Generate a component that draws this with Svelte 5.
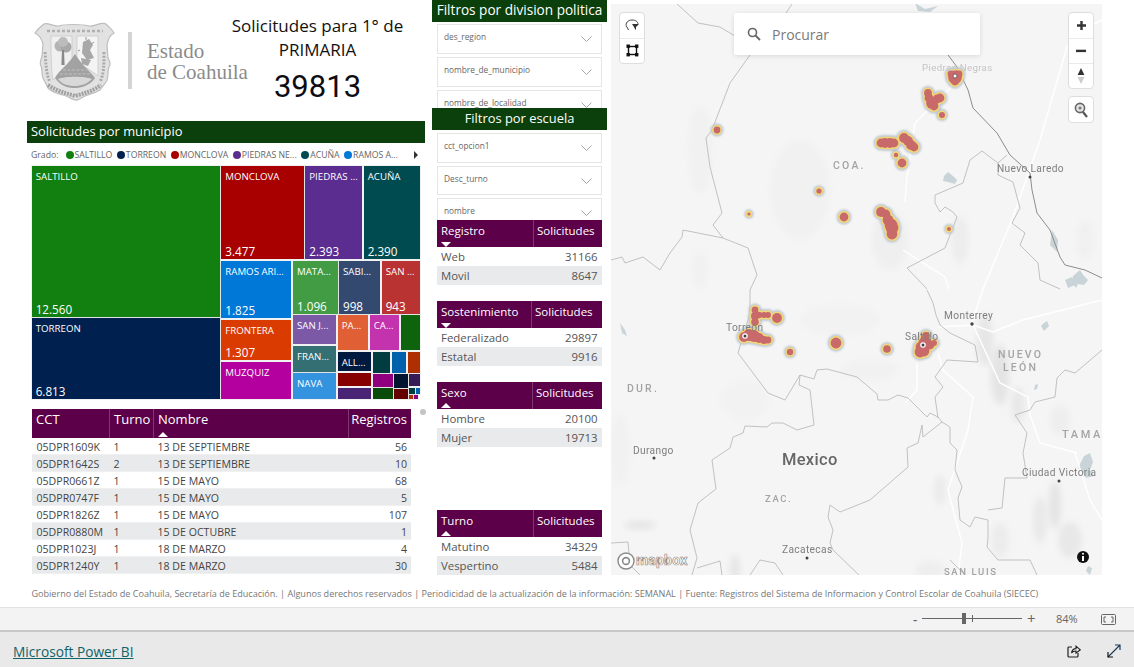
<script>
  const tiles = [
    [31.7,166,220,316.7,'#118011','SALTILLO','12.560'],
    [31.7,318.3,220,399.3,'#00214f','TORREON','6.813'],
    [221.3,166,304,259.3,'#a80000','MONCLOVA','3.477'],
    [305.3,166,362.3,259.3,'#5c2d91','PIEDRAS ...','2.393'],
    [363.7,166,420.3,259.3,'#004b50','ACUÑA','2.390'],
    [221.3,261,291,318,'#0078d7','RAMOS ARI...','1.825'],
    [293,261,337.7,313.7,'#429c44','MATA...','1.096'],
    [339,261,380.3,313.7,'#33496f','SABI...','998'],
    [381.7,261,420.3,313.7,'#b93333','SAN ...','943'],
    [221.3,319.7,291,360,'#da3b01','FRONTERA','1.307'],
    [221.3,362,291,399.3,'#b4009e','MUZQUIZ',''],
    [293,315,336.3,344,'#7c59a7','SAN J...',''],
    [293,345.7,336.3,371.7,'#336f73','FRAN...',''],
    [293,373.3,336.3,399.3,'#3393df','NAVA',''],
    [337.7,315,368,350,'#e15f35','PA...',''],
    [369.7,315,399.3,350,'#c333ae','CA...',''],
    [400.7,315,420.3,350,'#0d640d','',''],
    [337.7,351.7,371.3,371,'#001a3f','ALL...',''],
    [372.7,351.7,390,373,'#003c40','',''],
    [391.7,351.7,406.3,373,'#0060ac','',''],
    [408,351.7,420.3,373,'#ae2f01','',''],
    [337.7,372.7,371.3,386,'#860000','',''],
    [337.7,387.7,371.3,399.3,'#492474','',''],
    [372.7,374.3,392.7,386.7,'#90007e','',''],
    [394,374.3,407.7,387.7,'#00142f','',''],
    [409,374.3,420.3,386,'#371b57','',''],
    [372.7,388,392.7,399.3,'#0a4b0a','',''],
    [394,389.3,407.7,399.3,'#650000','',''],
    [409,387.7,415,394.3,'#003c40','',''],
    [415.7,387.7,420.3,394.3,'#0060ac','',''],
    [409,395,413.3,399.3,'#ae2f01','',''],
    [414,395,418.3,399.3,'#90007e','','']
  ];
  const legend = [
    ['#118011','SALTILLO'],['#00214f','TORREON'],['#a80000','MONCLOVA'],
    ['#5c2d91','PIEDRAS NE...'],['#004b50','ACUÑA'],['#0078d7','RAMOS A...']
  ];
  const rows = [
    ['05DPR1609K','1','13 DE SEPTIEMBRE','56'],
    ['05DPR1642S','2','13 DE SEPTIEMBRE','10'],
    ['05DPR0661Z','1','15 DE MAYO','68'],
    ['05DPR0747F','1','15 DE MAYO','5'],
    ['05DPR1826Z','1','15 DE MAYO','107'],
    ['05DPR0880M','1','15 DE OCTUBRE','1'],
    ['05DPR1023J','1','18 DE MARZO','4'],
    ['05DPR1240Y','1','18 DE MARZO','30']
  ];
  const blobs = [
    [955,77,6.5],[951,74,3],[959,74,3],[955,81,4],
    [928,93,3.5],[929,98,4],[932,103,5.5],[934,106,4],[937,99,4],[940,98,4],
    [942,115,2.6],[717,130,3],
    [881,143,4],[885,143,4.5],[890,143,4.5],[894,143,4],
    [904,138,4.5],[908,141,4.5],[911,145,4.5],[914,147,4],
    [896,155,1.8],[902,163,4],[819,191,2.2],[749,214,1.2],[844,217,4],
    [881,212,4.5],[886,214,4],[888,220,5],[891,225,6],[892,228,6],[892,234,5],[949,229,1.6],
    [755,310,3],[755,316,3.6],[755,322,3.4],[759,315,2.8],[764,315,2.6],[768,315,2.6],[777,318,4.5],
    [744,337,4.5],[749,335,5.5],[754,336,5.5],[759,338,4.5],[764,340,3.5],[768,340,3],
    [790,352,2.8],[836,343,5],[887,349,3.4],
    [921,347,5],[925,343,6],[930,345,4],[934,343,2.6],[920,352,5],[924,351,5],[926,336,3.5]
  ];
  const shade = [
    [985,340,8,26,'#e6e6e6'],[1000,375,9,30,'#e4e4e4'],[1018,405,7,18,'#e8e8e8'],
    [1055,505,6,24,'#e4e4e4'],[1040,520,7,24,'#e9e9e9'],[940,490,6,16,'#ebebeb'],
    [1070,540,12,18,'#e8e8e8'],[640,525,16,4,'#e4e4e4'],[620,450,10,36,'#f1f1f1'],
    [800,190,30,50,'#f1f1f1'],[700,150,12,45,'#f1f1f1'],[890,240,18,30,'#efefef'],
    [960,240,9,24,'#ededed'],[735,570,5,16,'#e6e6e6'],[745,400,24,20,'#f2f2f2'],
    [840,320,40,16,'#f2f2f2'],[870,370,30,10,'#f1f1f1'],[1085,240,8,20,'#f0f0f0'],
    [1060,420,10,15,'#eeeeee'],[700,270,8,20,'#f1f1f1'],[1000,540,9,18,'#ececec'],[930,570,14,10,'#eeeeee']
  ];
  const borders = [
    'M677 4L698 23 720 27 735 36',
    'M792 4L786 13',
    'M750 55L730 83 712 130 706 138 710 167 722 213 713 225 723 238 748 248 757 275 750 290 750 313 738 353 768 393 785 400 800 375 814 379 817 370 827 369 857 377 877 394 878 400 888 400 898 395 908 398 927 417 930 413 938 417 942 422 950 427 950 443 957 450 955 470 962 487 958 498 960 520 970 527 975 517 988 520 988 538 987 547 998 560 1030 560 1037 575',
    'M800 375L799 385 810 390 814 425 797 430 783 423 772 423 767 427 745 426 743 433 733 437 730 448 712 460 716 489 698 503 690 530 697 558 692 575',
    'M611 260L622 257 625 263 643 257 660 270 670 253 682 237 683 230 723 238',
    'M942 422L923 437 922 425 918 443 907 448 908 467 870 500 840 512 830 505 828 517 833 530 830 543 833 550 860 576',
    'M988 510L1002 508 1005 478 1027 478 1023 453 1027 433 1015 415 1030 410 1035 402 1055 397 1057 378 1065 370 1075 373 1102 350',
    'M927 290L933 303 936 315 940 325 950 333 975 345 978 362 947 360 935 377 943 387 935 397 938 418',
    'M907 268L945 248 957 217 953 212 945 207 940 212 935 203 935 195 963 183 970 160 982 151 998 163 1007 155',
    'M907 268L927 289',
    'M998 163L998 175 1013 182 1020 208 1012 223 1025 233 1020 245 1038 263 1040 280 1060 289',
    'M611 543L628 542 630 565 640 575',
    'M697 568L720 561 722 575 M750 575L760 560 775 563 783 575 M950 560L965 575'
  ];
  const riogrande = 'M948 55L957 67 968 90 973 108 997 133 1010 155 1030 173 1032 190 1037 213 1050 230 1060 257 1065 265 1085 270 1102 278';
  const roads = [
    'M953 85L930 108 915 123 907 177 905 202',
    'M1067 47L1040 140 1013 217 983 289 972 323',
    'M903 250L945 277 949 289',
    'M1102 300L1023 320 993 332 973 325 938 327',
    'M973 325L1000 383 1028 397 1030 415 1040 443 1077 453',
    'M938 353L943 370 973 397 968 430 948 490 962 543 958 575',
    'M917 363L917 390 905 403',
    'M1075 453L1090 500 1102 520',
    'M1102 20L1085 28 1067 47'
  ];
  const water = [
    'M944 176L948 172 953 176 957 180 955 184 948 182 943 181Z',
    'M1073 276L1080 270 1084 276 1088 280 1084 285 1078 284 1076 288 1072 282Z',
    'M1084 456L1090 453 1093 462 1090 470 1094 476 1086 478 1082 470 1078 468Z',
    'M1044 323L1047 321 1049 326 1044 331 1041 326Z',
    'M1035 385L1038 384 1037 389 1034 390Z',
    'M620 323L625 330 627 336 622 333Z',
    'M915 3L925 9 938 6 930 12 918 11Z',
    'M1065 280L1072 277 1075 285 1068 288Z',
    'M1088 566L1092 568 1090 575 1086 571Z',
    'M1052 230L1058 240 1057 252 1050 245Z'
  ];
</script>

{#snippet slicer(label, clip = false)}
  <div class="slicer" class:clip>
    <span>{label}</span>
    <svg class="chev" width="11" height="6" viewBox="0 0 11 6"><path d="M.5.5l5 5 5-5" fill="none" stroke="#a8a8a8"/></svg>
  </div>
{/snippet}

{#snippet mini(first, arrow, a, av, b, bv, split, top)}
  <div class="mini" style="margin-top:{top}px;grid-template-columns:{split}px 1fr">
    <div class="mh first">{first}<i class={arrow}></i></div>
    <div class="mh second">Solicitudes</div>
    <div class="mc">{a}</div><div class="mc num">{av}</div>
    <div class="mc alt">{b}</div><div class="mc num alt">{bv}</div>
  </div>
{/snippet}

<div class="page">
  <div class="report">
    <section class="left">
      <header class="brand">
        <div class="logo">
          <svg width="84" height="82" viewBox="0 0 84 82">
            <path d="M2 13C5 8 8 7 11 4 15 2 20 7 26 6 32 4 48 4 56 6 62 7 68 1 73 4 76 7 79 9 81 13 77 15 75 19 74 25L75 38C77 42 78 44 76 47 74 52 76 58 73 62L67 70C60 74 58 73 52 76 48 78 44 81 42 80 38 79 34 76 30 75 24 73 20 73 15 68L10 58C8 52 10 50 8 46 6 43 8 40 9 36L10 24C9 20 6 15 2 13Z" fill="#e2e2e2" stroke="#bdbdbd" stroke-width="1.2"/>
            <path d="M18 16L39 16 39 44C34 48 26 54 20 60 18 50 18 30 18 16Z" fill="#f0f0f0" stroke="#c4c4c4" stroke-width=".7"/>
            <path d="M44 16L65 16 65 56C58 50 50 46 44 42Z" fill="#f4f4f4" stroke="#c4c4c4" stroke-width=".7"/>
            <circle cx="27" cy="26" r="5.5" fill="#b4b4b4"/><circle cx="33" cy="27" r="5.5" fill="#a8a8a8"/><circle cx="30" cy="22" r="5" fill="#bcbcbc"/>
            <path d="M29 30h2l.6 15h-3.2z" fill="#8a8a8a"/>
            <path d="M50 22l6-3 4 6-3 5 4 8-7 2-5-7zM48 38l10 2-3 6-6-2z" fill="#a8a8a8"/>
            <path d="M53 20v-3M58 24l3-2M47 30l-2 1" stroke="#999" stroke-width="1"/>
            <path d="M42 34C36 44 26 50 22 58 28 66 34 68 42 68 52 68 60 62 62 58 56 50 48 44 42 34Z" fill="#a2a2a2"/>
            <path d="M30 50h24M27 54h30" stroke="#c6c6c6" stroke-width=".8" stroke-dasharray="3 1.5"/>
            <path d="M25 59C32 56 52 56 59 59 54 64 48 66 42 66 34 66 29 64 25 59Z" fill="#d8d8d8"/>
            <path d="M15 65C24 71 32 73 42 76 52 73 60 71 68 65" fill="none" stroke="#a0a0a0" stroke-width="4" stroke-dasharray="2 1"/>
            <path d="M12 32C13 44 13 54 17 62M71 32C71 44 71 54 67 62" fill="none" stroke="#aaaaaa" stroke-width="3" stroke-dasharray="2 1.4"/>
            <path d="M14 11H70" stroke="#b0b0b0" stroke-width="2.4" stroke-dasharray="3 2"/>
          </svg>
        </div>
        <div class="rule"></div>
        <div class="estado"><span>Estado</span><span>de Coahuila</span></div>
        <div class="title">
          <div class="t1">Solicitudes para 1° de<br/>PRIMARIA</div>
          <div class="count">39813</div>
        </div>
      </header>
      <h2 class="band muni">Solicitudes por municipio</h2>
      <div class="legend">
        <span class="grado">Grado:</span>
        {#each legend as l}
          <span class="item"><i style="background:{l[0]}"></i>{l[1]}</span>
        {/each}
        <b class="more"></b>
      </div>
      <div class="treemap">
        {#each tiles as t}
          <div class="tile" style="left:{t[0]-31.7}px;top:{t[1]-166}px;width:{t[2]-t[0]}px;height:{t[3]-t[1]}px;background:{t[4]}">
            {#if t[5]}<span class="nm">{t[5]}</span>{/if}
            {#if t[6]}<span class="val">{t[6]}</span>{/if}
          </div>
        {/each}
      </div>
      <div class="tablewrap">
        <div class="schools">
          <div class="sh">CCT</div><div class="sh">Turno</div><div class="sh">Nombre<i class="up"></i></div><div class="sh right">Registros</div>
          {#each rows as r, i}
            <div class="sc" class:alt={i % 2}>{r[0]}</div>
            <div class="sc" class:alt={i % 2}>{r[1]}</div>
            <div class="sc" class:alt={i % 2}>{r[2]}</div>
            <div class="sc num" class:alt={i % 2}>{r[3]}</div>
          {/each}
        </div>
        <span class="dot"></span>
      </div>
    </section>

    <section class="middle">
      <h2 class="band side">Filtros por division politica</h2>
      <div class="slicers">
        {@render slicer('des_region')}
        {@render slicer('nombre_de_municipio')}
        {@render slicer('nombre_de_localidad', true)}
      </div>
      <h2 class="band side second-band">Filtros por escuela</h2>
      <div class="slicers lower">
        {@render slicer('cct_opcion1')}
        {@render slicer('Desc_turno')}
        {@render slicer('nombre', true)}
      </div>
      {@render mini('Registro','down','Web','31166','Movil','8647',96,0)}
      {@render mini('Sostenimiento','down','Federalizado','29897','Estatal','9916',94,16)}
      {@render mini('Sexo','up','Hombre','20100','Mujer','19713',95,16)}
      {@render mini('Turno','up','Matutino','34329','Vespertino','5484',96,63)}
    </section>

    <section class="map">
      <svg class="base" viewBox="611 4 491 571" width="491" height="571">
        <defs>
          <filter id="soft" x="-50%" y="-50%" width="200%" height="200%"><feGaussianBlur stdDeviation="3"/></filter>
          <filter id="halo" x="-50%" y="-50%" width="200%" height="200%"><feGaussianBlur stdDeviation="1"/></filter>
          <filter id="line"><feGaussianBlur stdDeviation=".3"/></filter>
        </defs>
        <rect x="611" y="4" width="491" height="571" fill="#f5f5f5"/>
        <g filter="url(#soft)">
          {#each shade as s}<ellipse cx={s[0]} cy={s[1]} rx={s[2]} ry={s[3]} fill={s[4]}/>{/each}
        </g>
        <g filter="url(#line)">
          {#each water as w}<path d={w} fill="#c8d4d8"/>{/each}
          {#each roads as r}<path d={r} fill="none" stroke="#fff" stroke-width="1.4"/>{/each}
          {#each borders as b}<path d={b} fill="none" stroke="#b4b4b4" stroke-width=".8"/>{/each}
          <path d={riogrande} fill="none" stroke="#8c8c8c" stroke-width="1"/>
        </g>
        <g filter="url(#halo)">
          {#each blobs as b}<circle cx={b[0]} cy={b[1]} r={b[2]+3.4} fill="#b9c4d0"/>{/each}
        </g>
        <g filter="url(#line)">
          {#each blobs as b}<circle cx={b[0]} cy={b[1]} r={b[2]+2} fill="#f2d878"/>{/each}
          {#each blobs as b}<circle cx={b[0]} cy={b[1]} r={b[2]+.4} fill="#c8696b"/>{/each}
        </g>
        <g class="pins">
          <circle cx="955" cy="76" r="2" fill="#fff" stroke="#555" stroke-width=".8"/>
          <circle cx="1030" cy="177" r="1.5"/><circle cx="972" cy="324" r="1.7"/>
          <circle cx="745" cy="336" r="2.8" fill="#fff"/><circle cx="745" cy="336" r="1.5"/>
          <circle cx="923" cy="345" r="2.8" fill="#fff"/><circle cx="923" cy="345" r="1.5"/>
          <circle cx="654" cy="458" r="1.5"/><circle cx="807" cy="558" r="1.5"/><circle cx="1059" cy="481" r="1.5"/>
        </g>
        <g class="labels" filter="url(#line)">
          <text class="faint" x="922" y="71">Piedras Negras</text>
          <text x="997" y="172">Nuevo Laredo</text>
          <text x="944" y="319">Monterrey</text>
          <text x="726" y="331">Torreón</text>
          <text x="905" y="340">Saltillo</text>
          <text x="633" y="454">Durango</text>
          <text x="782" y="553">Zacatecas</text>
          <text x="1022" y="476">Ciudad Victoria</text>
          <text class="state" x="833" y="169">COA.</text>
          <text class="state" x="998" y="358">NUEVO</text>
          <text class="state" x="1003" y="371">LEÓN</text>
          <text class="state" x="627" y="392">DUR.</text>
          <text class="state small" x="765" y="502">ZAC.</text>
          <text class="state big" x="1062" y="438">TAMA</text>
          <text class="state small" x="944" y="574.5">SAN LUIS</text>
          <text class="country" x="782" y="465">Mexico</text>
        </g>
        <circle cx="1083" cy="557" r="6" fill="#111"/>
        <circle cx="1083" cy="553.8" r="1" fill="#fff"/><path d="M1082 556h2v5h-2z" fill="#fff"/>
        <circle cx="626" cy="561" r="8" fill="#fff" stroke="#8a8a8a" stroke-width="1.4"/>
        <circle cx="626" cy="561" r="3.4" fill="none" stroke="#8a8a8a" stroke-width="1.6"/>
        <text class="mapbox" x="636" y="565">mapbox</text>
      </svg>

      <div class="search">
        <svg width="14" height="14" viewBox="0 0 14 14"><circle cx="5.5" cy="5.5" r="4" fill="none" stroke="#666" stroke-width="1.6"/><path d="M8.5 8.5L13 13" stroke="#666" stroke-width="1.8"/></svg>
        <span>Procurar</span>
      </div>
      <div class="ctrl tools">
        <div class="btn">
          <svg width="14" height="13" viewBox="0 0 14 13"><path d="M1.5 8C0 4 3 1 7 1s6 2 6 4" fill="none" stroke="#444" stroke-width="1"/><path d="M7 5h7l-3 3v3l-1-1-1-2z" fill="#333"/><path d="M2 8l1.5 3" stroke="#444"/></svg>
        </div>
        <div class="btn">
          <svg width="13" height="13" viewBox="0 0 13 13"><rect x="2.5" y="2.5" width="8" height="8" fill="none" stroke="#111" stroke-width="1.4"/><g fill="#111"><rect x=".5" y=".5" width="3.4" height="3.4"/><rect x="9" y=".5" width="3.4" height="3.4"/><rect x=".5" y="9" width="3.4" height="3.4"/><rect x="9" y="9" width="3.4" height="3.4"/></g></svg>
        </div>
      </div>
      <div class="rightctrls">
        <div class="ctrl">
          <div class="btn"><svg width="11" height="11" viewBox="0 0 11 11"><path d="M4.3 1h2.4v3.3H10v2.4H6.7V10H4.3V6.7H1V4.3h3.3z" fill="#333"/></svg></div>
          <div class="btn"><svg width="10" height="4" viewBox="0 0 10 4"><rect y=".7" width="10" height="2.4" fill="#333"/></svg></div>
          <div class="btn tall"><svg width="8" height="16" viewBox="0 0 8 16"><path d="M4 0l3.4 7H.6z" fill="#333"/><path d="M4 16l3.4-7H.6z" fill="#ccc"/></svg></div>
        </div>
        <div class="ctrl single">
          <div class="btn tall2"><svg width="14" height="16" viewBox="0 0 14 16"><circle cx="6" cy="6" r="4.6" fill="#e3e3e3" stroke="#666" stroke-width="1.6"/><circle cx="6" cy="6" r="1.5" fill="#777"/><path d="M9 10l4 5" stroke="#555" stroke-width="2.2"/></svg></div>
        </div>
      </div>
    </section>
  </div>

  <p class="foot">Gobierno del Estado de Coahuila, Secretaría de Educación. | Algunos derechos reservados | Periodicidad de la actualización de la información: SEMANAL | Fuente: Registros del Sistema de Informacion y Control Escolar de Coahuila (SIECEC)</p>

  <div class="zoombar">
    <span class="pm">-</span>
    <div class="slider"><i class="thumb"></i><i class="tick"></i></div>
    <span class="pm plus">+</span>
    <span class="pct">84%</span>
    <svg class="fit" width="15" height="11" viewBox="0 0 15 11"><rect x=".5" y=".5" width="14" height="10" rx="1" fill="none" stroke="#666"/><path d="M5 3H3v5h2M10 3h2v5h-2" fill="none" stroke="#666"/></svg>
  </div>
  <div class="brandbar">
    <a href="#top">Microsoft Power BI</a>
    <div class="baricons">
      <svg width="14" height="14" viewBox="0 0 14 14"><path d="M5 3H2a1 1 0 0 0-1 1v8a1 1 0 0 0 1 1h8a1 1 0 0 0 1-1V9" fill="none" stroke="#222" stroke-width="1.2"/><path d="M4.5 9C5 6 7 4.6 9 4.6V2.2l4.3 3.6L9 9.2V7C7 7 5.6 7.6 4.5 9Z" fill="none" stroke="#222" stroke-width="1.1"/></svg>
      <svg width="14" height="14" viewBox="0 0 14 14"><path d="M1 13L13 1M8 1h5v5" fill="none" stroke="#1c3a5a" stroke-width="1.2"/><path d="M1 8v5h5" fill="none" stroke="#111" stroke-width="1.2"/></svg>
    </div>
  </div>
</div>

<style>
  :global(body) { margin: 0; background: #fff; }
  .page { width: 1134px; height: 667px; overflow: hidden; display: flex; flex-direction: column; font-family: "Open Sans", "Noto Sans", sans-serif; color: #333; }
  .report { display: flex; height: 587px; padding-left: 27px; box-sizing: border-box; }
  h2 { margin: 0; font-weight: 400; }

  .left { width: 398px; flex: none; }
  .brand { display: flex; height: 121px; align-items: flex-start; }
  .logo { margin: 20px 0 0 6px; height: 82px; width: 84px; flex: none; }
  .rule { width: 4px; height: 57px; margin: 32px 0 0 11px; background: #d4d4d4; flex: none; }
  .estado { font: 21px/21px "Liberation Serif", serif; color: #8b8b8b; margin: 41px 0 0 15px; width: 103px; white-space: nowrap; flex: none; }
  .estado span { display: block; height: 21px; overflow: visible; }
  .title { flex: 1; text-align: center; color: #111; margin: 14px 0 0 -40px; }
  .t1 { font-size: 17px; line-height: 24px; white-space: nowrap; }
  .count { font: 400 31px/38px Roboto, sans-serif; margin-top: 6px; color: #0d0d14; }

  .band { background: #0b3f0b; color: #fff; }
  .muni { height: 22px; line-height: 20px; font-size: 12.9px; padding-left: 4px; }

  .legend { height: 23px; display: flex; align-items: center; padding: 1px 0 0 4px; box-sizing: border-box; font-size: 8.7px; color: #666; position: relative; white-space: nowrap; }
  .grado { width: 34.5px; flex: none; }
  .item { display: inline-flex; align-items: center; margin-right: 4.5px; }
  .item i { width: 8px; height: 8px; border-radius: 50%; margin-right: 1px; }
  .more { position: absolute; left: 387px; top: 8px; border-left: 4px solid #333; border-top: 4px solid transparent; border-bottom: 4px solid transparent; }

  .treemap { position: relative; width: 390px; height: 234px; margin-left: 4.7px; box-sizing: border-box; }
  .tile { position: absolute; overflow: hidden; color: #fff; white-space: nowrap; outline: 1px solid rgba(170,180,180,.18); }
  .nm { position: absolute; left: 4px; top: 4px; font-size: 9.7px; line-height: 13px; }
  .val { position: absolute; left: 4px; bottom: 0; font-size: 11.7px; line-height: 16px; }

  .tablewrap { position: relative; margin: 9px 0 0 5px; }
  .schools { display: grid; grid-template-columns: 77px 44px 195px 63px; width: 379px; font-size: 10.6px; }
  .sh { position: relative; height: 29px; background: #5c0049; color: #fff; font-size: 13px; line-height: 20px; padding-left: 4px; border-left: 1px solid #7d3a70; box-sizing: border-box; white-space: nowrap; }
  .sh:first-child { border-left: 0; }
  .sh.right { text-align: right; padding: 0 4px 0 0; }
  .sc { height: 17px; line-height: 18px; padding-left: 4.5px; box-sizing: border-box; color: #444; white-space: nowrap; border-bottom: 1px solid #f0f0f0; }
  .sc.alt, .mc.alt { background: #e9eaec; }
  .num { text-align: right; padding: 0 4px 0 0; }
  .dot { position: absolute; left: 388px; top: 0; width: 6px; height: 6px; border-radius: 50%; background: #c4c4c4; }
  i.up, i.down { position: absolute; left: 4px; bottom: 1px; border-left: 5px solid transparent; border-right: 5px solid transparent; }
  i.up { border-bottom: 5px solid #fff; }
  i.down { border-top: 5px solid #fff; bottom: 0; }

  .middle { width: 175px; margin-left: 7px; flex: none; }
  .side { height: 22px; line-height: 19px; font-size: 13.6px; text-align: center; white-space: nowrap; overflow: hidden; }
  .second-band { line-height: 21px; font-size: 12.9px; }
  .slicers { display: flex; flex-direction: column; gap: 3.5px; padding: 2px 5px 0; box-sizing: border-box; }
  .slicers.lower { padding-top: 3px; gap: 3px; }
  .slicer { height: 29.5px; flex: none; border: 1.5px solid #e5e5e5; box-sizing: border-box; position: relative; font-size: 8.3px; color: #666; padding: 6px 0 0 6px; line-height: 12px; }
  .slicer.clip { height: 18px; border-bottom: 0; overflow: hidden; }
  .lower .slicer.clip { height: 21.5px; }
  .chev { position: absolute; right: 9px; top: 11px; }

  .mini { display: grid; width: 164.5px; margin-left: 5px; font-size: 11.4px; }
  .mh { position: relative; height: 27px; background: #5c0049; color: #fff; font-size: 11.5px; line-height: 21px; padding-left: 4px; box-sizing: border-box; white-space: nowrap; }
  .mh.second { border-left: 1px solid #7d3a70; padding-left: 3px; }
  .mc { height: 19px; line-height: 19px; padding-left: 4px; box-sizing: border-box; color: #555; }
  .mc.num { padding: 0 4px 0 0; }

  .map { position: relative; width: 491px; height: 571px; margin: 4px 0 0 4px; flex: none; overflow: hidden; }
  .base { display: block; }
  .pins circle { fill: #444; }
  .pins circle[fill="#fff"] { fill: #fff; }
  .labels text { font: 400 10.2px Roboto, sans-serif; fill: #7e7e7e; letter-spacing: .35px; }
  .labels .faint { font-size: 9.7px; fill: #c4c4c4; }
  .labels .state { font-weight: 500; font-size: 10.5px; letter-spacing: 2.2px; fill: #a4a4a4; }
  .labels .state.small { font-size: 9.5px; letter-spacing: 1.6px; }
  .labels .state.big { font-size: 11px; letter-spacing: 2.6px; }
  .labels .country { font-size: 16.5px; font-weight: 500; fill: #666; letter-spacing: .3px; }
  .mapbox { font: 700 14px Roboto, sans-serif; fill: #fff; stroke: #8f8f8f; stroke-width: .7px; letter-spacing: .2px; }

  .search { position: absolute; left: 123px; top: 9px; width: 246px; height: 42px; background: #fff; border-radius: 2px; box-shadow: 0 1px 5px rgba(0,0,0,.12); display: flex; align-items: center; padding-left: 13px; box-sizing: border-box; gap: 11px; font-size: 14px; color: #7a7a7a; }
  .search svg { flex: none; }
  .ctrl { background: #fff; border: 1.5px solid #dedede; border-radius: 4px; width: 26px; box-sizing: border-box; overflow: hidden; }
  .tools { position: absolute; left: 8px; top: 8px; }
  .rightctrls { position: absolute; left: 457px; top: 8px; display: flex; flex-direction: column; gap: 7px; }
  .btn { height: 25.5px; display: flex; align-items: center; justify-content: center; border-bottom: 1px solid #eaeaea; box-sizing: border-box; }
  .btn:last-child { border-bottom: 0; height: 24px; }
  .btn.tall { height: 24px; }
  .btn.tall2 { height: 25px; }

  .foot { margin: 0; height: 20px; line-height: 14px; font-size: 9.07px; color: #777; padding: 0 0 0 31.5px; white-space: nowrap; border-bottom: 1px solid #e2e2e2; box-sizing: content-box; }
  .zoombar { height: 22px; background: #f3f3f3; border-bottom: 2px solid #c8c8c8; display: flex; align-items: center; position: relative; font-size: 11px; color: #666; box-sizing: content-box; flex: none; }
  .pm { position: absolute; left: 913px; top: 2px; font-size: 13px; font-weight: 600; line-height: 18px; }
  .pm.plus { left: 1027px; top: 1px; font-size: 15px; font-weight: 400; }
  .slider { position: absolute; left: 922px; top: 10px; width: 100px; height: 1px; background: #666; }
  .thumb { position: absolute; left: 40px; top: -5px; width: 4px; height: 11px; background: #666; }
  .tick { position: absolute; left: 50px; top: -3px; width: 1px; height: 7px; background: #666; }
  .pct { position: absolute; left: 1056px; top: 3px; line-height: 16px; }
  .fit { position: absolute; left: 1101px; top: 6px; }
  .brandbar { flex: 1; background: #e9e9e9; position: relative; }
  .brandbar a { position: absolute; left: 13px; top: 10px; font-size: 13.7px; line-height: 19px; color: #0e6368; text-decoration: underline; white-space: nowrap; }
  .baricons { position: absolute; left: 1067px; top: 12px; display: flex; gap: 26px; }
</style>
